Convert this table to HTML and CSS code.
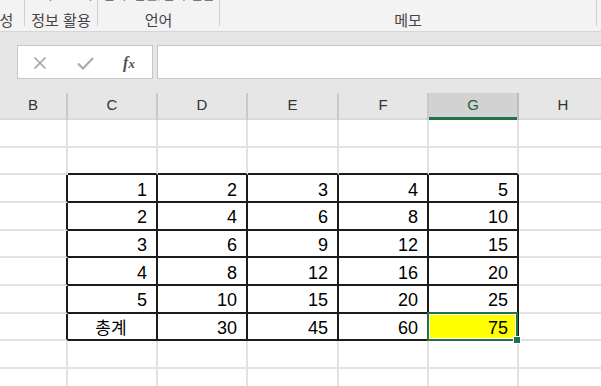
FILE: index.html
```html
<!DOCTYPE html>
<html lang="ko">
<head>
<meta charset="utf-8">
<title>Excel</title>
<link rel="stylesheet" href="styles.css">
</head>
<body>
<div class="app">
  <div class="ribbon">
    <div class="grp g0"><span class="cut">&nbsp;</span><span class="lbl">성</span></div>
    <div class="grp g1"><span class="cut">스마트 조회</span><span class="lbl">정보 활용</span></div>
    <div class="grp g2"><span class="cut">번역 &nbsp;한글/한자 변환</span><span class="lbl">언어</span></div>
    <div class="grp g3"><span class="cut">&nbsp;</span><span class="lbl">메모</span></div>
  </div>
  <div class="fbar">
    <div class="namebox">
      <span class="ico ix"><svg width="14" height="14" viewBox="0 0 14 14"><path d="M1.5 1.5 L12.5 12.5 M12.5 1.5 L1.5 12.5" stroke="#a3a3a3" stroke-width="1.6" fill="none"/></svg></span>
      <span class="ico iv"><svg width="17" height="13" viewBox="0 0 17 13"><path d="M1 6.5 L6 11.5 L16 1" stroke="#ababab" stroke-width="2.2" fill="none"/></svg></span>
      <span class="ico fx"><i>f</i><i class="xx">x</i></span>
    </div>
    <div class="input"></div>
  </div>
  <div class="heads">
    <div class="h">B</div>
    <div class="h">C</div>
    <div class="h">D</div>
    <div class="h">E</div>
    <div class="h">F</div>
    <div class="h hs">G</div>
    <div class="h">H</div>
  </div>
  <div class="grid">
    <div class="c"></div><div class="c"></div><div class="c"></div><div class="c"></div><div class="c"></div><div class="c"></div><div class="c"></div>
    <div class="c"></div><div class="c bb"></div><div class="c bb"></div><div class="c bb"></div><div class="c bb"></div><div class="c bb"></div><div class="c"></div>
    <div class="c br"></div><div class="c t">1</div><div class="c t">2</div><div class="c t">3</div><div class="c t">4</div><div class="c t">5</div><div class="c"></div>
    <div class="c br"></div><div class="c t">2</div><div class="c t">4</div><div class="c t">6</div><div class="c t">8</div><div class="c t">10</div><div class="c"></div>
    <div class="c br"></div><div class="c t">3</div><div class="c t">6</div><div class="c t">9</div><div class="c t">12</div><div class="c t">15</div><div class="c"></div>
    <div class="c br"></div><div class="c t">4</div><div class="c t">8</div><div class="c t">12</div><div class="c t">16</div><div class="c t">20</div><div class="c"></div>
    <div class="c br"></div><div class="c t">5</div><div class="c t">10</div><div class="c t">15</div><div class="c t">20</div><div class="c t">25</div><div class="c"></div>
    <div class="c br"></div><div class="c t ctr">총계</div><div class="c t">30</div><div class="c t">45</div><div class="c t">60</div><div class="c t sel">75</div><div class="c"></div>
    <div class="c"></div><div class="c"></div><div class="c"></div><div class="c"></div><div class="c"></div><div class="c"></div><div class="c"></div>
    <div class="c"></div><div class="c"></div><div class="c"></div><div class="c"></div><div class="c"></div><div class="c"></div><div class="c"></div>
  </div>
</div>
</body>
</html>
```
FILE: styles.css
```css
html, body {
  margin: 0;
  padding: 0;
  background: #ffffff;
}
.app {
  width: 601px;
  height: 386px;
  overflow: hidden;
  font-family: "Liberation Sans", "Noto Sans CJK KR", sans-serif;
}
.ribbon {
  height: 31px;
  background: #f3f3f3;
  border-bottom: 1px solid #d6d6d6;
  display: flex;
  align-items: flex-start;
}
.grp {
  height: 26px;
  border-right: 1px solid #cfcfcf;
  display: flex;
  flex-direction: column;
  align-items: center;
  flex: none;
  font-family: "Noto Sans CJK KR", sans-serif;
  color: #444444;
  font-size: 15px;
}
.g0 { width: 35px; margin-left: -11px; }
.g1 { width: 72px; }
.g2 { width: 121px; }
.g3 { width: 376px; }
.cut {
  line-height: 14px;
  height: 14px;
  margin-top: -13px;
  font-size: 13px;
  color: #777;
  white-space: nowrap;
}
.lbl {
  line-height: 20px;
  margin-top: 9px;
  white-space: nowrap;
}
.fbar {
  height: 61px;
  background: #e6e6e6;
  display: flex;
  align-items: flex-start;
  padding-top: 13px;
  box-sizing: border-box;
}
.namebox {
  margin-left: 17px;
  width: 136px;
  height: 34px;
  box-sizing: border-box;
  background: #fff;
  border: 1px solid #c6c6c6;
  display: flex;
  align-items: center;
  padding-left: 15px;
}
.ico { display: flex; align-items: center; justify-content: center; flex: none; }
.ix { width: 14px; margin-top: 2px; }
.iv { width: 17px; margin-left: 30px; margin-top: 2px; }
.fx {
  width: 18px;
  margin-left: 26px;
  font-family: "Liberation Serif", serif;
  font-weight: bold;
  color: #505050;
  font-size: 16px;
  margin-top: 1px;
}
.fx .xx { font-size: 13px; margin-top: 3px; }
.input {
  margin-left: 4px;
  flex: 1;
  height: 34px;
  box-sizing: border-box;
  background: #fff;
  border: 1px solid #c6c6c6;
  margin-right: -4px;
}
.heads {
  height: 27px;
  background: #e6e6e6;
  display: grid;
  grid-template-columns: 68px 90px 90px 91px 90px 90px 90px;
}
.h {
  border-right: 2px solid #c9c9c9;
  box-shadow: inset 0 -2px 0 #dadada;
  display: flex;
  align-items: center;
  justify-content: center;
  padding-bottom: 4px;
  box-sizing: border-box;
  font-size: 15px;
  color: #333333;
}
.hs {
  background: #d2d2d2;
  color: #1d5d3a;
  box-shadow: inset 0 -3px 0 #217346;
  border-right-color: #bdbdbd;
}
.grid {
  display: grid;
  grid-template-columns: 68px 90px 90px 91px 90px 90px 90px;
  grid-auto-rows: 27.67px;
}
.c {
  border-right: 2px solid #e2e2e2;
  border-bottom: 2px solid #e2e2e2;
  box-sizing: border-box;
  display: flex;
  align-items: center;
  justify-content: flex-end;
  padding-right: 9px;
  padding-top: 4px;
  font-size: 18px;
  color: #000;
}
.bb { border-bottom-color: #1c1c1c; }
.br { border-right-color: #1c1c1c; }
.t { border-right-color: #1c1c1c; border-bottom-color: #1c1c1c; }
.ctr {
  justify-content: center;
  padding-right: 2px;
  font-family: "Noto Sans CJK KR", sans-serif;
  font-size: 17px;
  padding-top: 0;
}
.sel {
  background: #ffff00;
  position: relative;
}
.sel::after {
  content: "";
  position: absolute;
  left: -2px;
  top: -2px;
  right: -1px;
  bottom: -2px;
  border: 2px solid #217346;
  box-shadow: inset 0 0 0 1px #ffffff;
}
.sel::before {
  content: "";
  position: absolute;
  right: -4px;
  bottom: -5px;
  width: 6px;
  height: 6px;
  background: #217346;
  border: 1px solid #ffffff;
  z-index: 2;
}
```
